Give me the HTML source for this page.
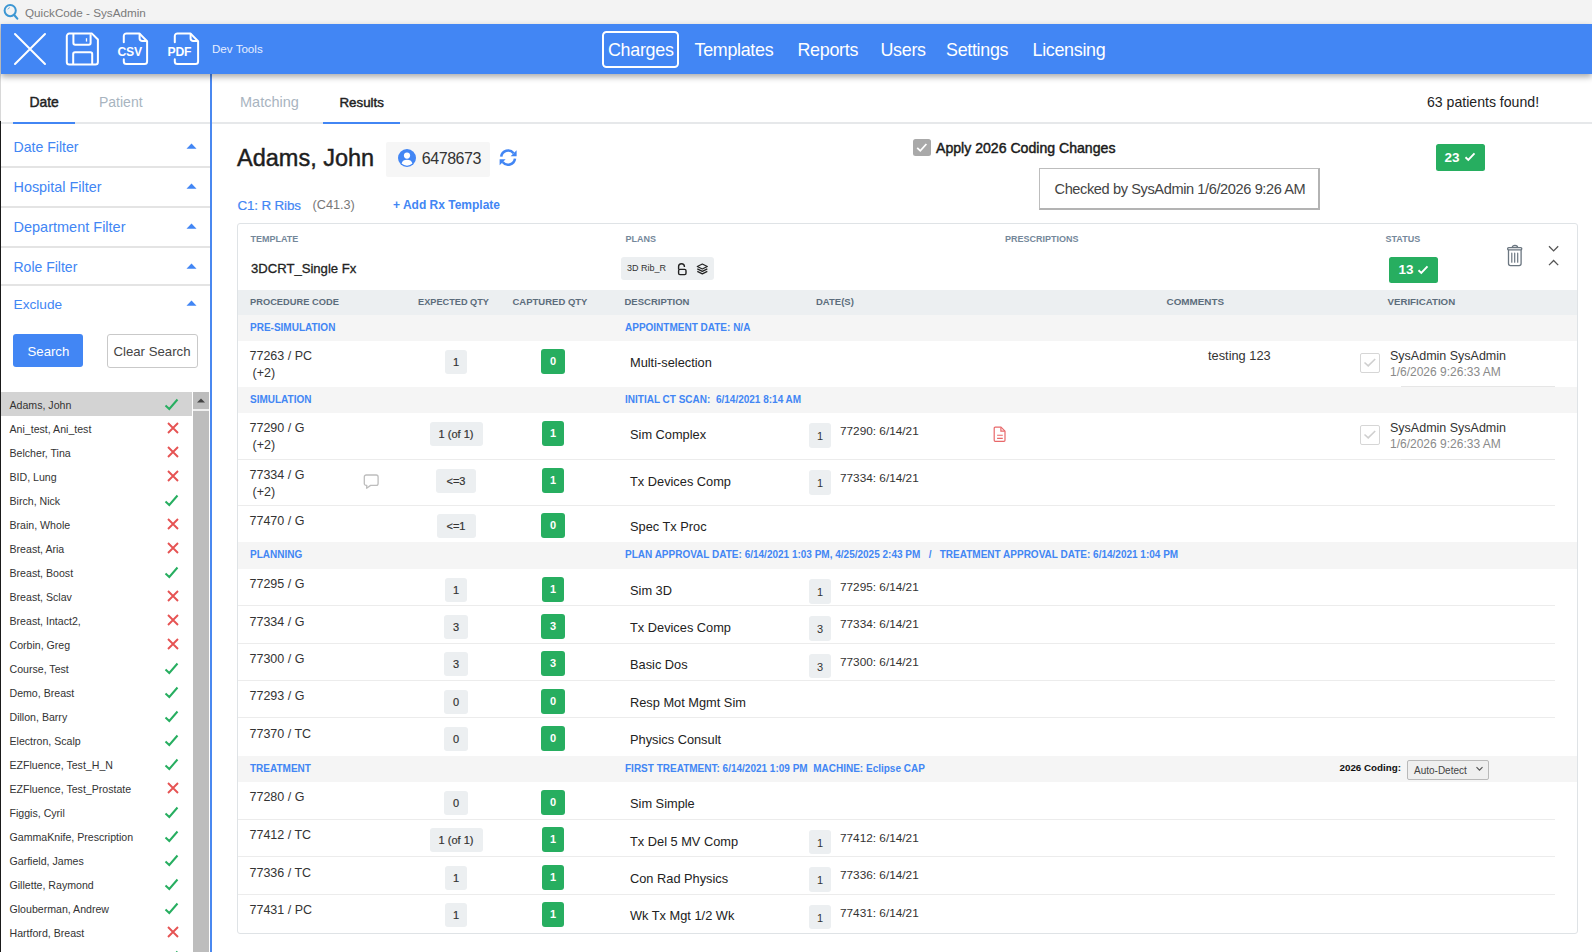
<!DOCTYPE html><html><head><meta charset="utf-8"><style>
*{box-sizing:border-box;margin:0;padding:0}
html,body{width:1592px;height:952px;overflow:hidden;background:#fff;font-family:"Liberation Sans",sans-serif;color:#333}
.t{position:absolute;white-space:nowrap;line-height:1}
.b{position:absolute}
svg{position:absolute;overflow:visible}
</style></head><body>

<div class="b" style="left:0;top:0;width:1592px;height:24px;background:#f3f3f3"></div>
<svg style="left:0;top:0" width="24" height="24"><circle cx="10.2" cy="10.6" r="5.6" fill="none" stroke="#3d97d3" stroke-width="2"/><line x1="14" y1="14.8" x2="17.3" y2="18.6" stroke="#3d97d3" stroke-width="2.2" stroke-linecap="round"/><path d="M7.8 9.4 A3 3 0 0 1 9.8 7.6" stroke="#3d97d3" stroke-width="0.8" fill="none"/></svg>
<div class="t" style="left:25px;top:6.6px;font-size:11.7px;color:#7a7a7a">QuickCode - SysAdmin</div>
<div class="b" style="left:1px;top:24px;width:1591px;height:49.5px;background:#4286f4;box-shadow:0 2.5px 6px rgba(0,0,0,0.33);z-index:2"></div>
<svg style="left:0;top:24px;z-index:3" width="60" height="49"><path d="M15 10 L45 40 M45 10 L15 40" stroke="#fff" stroke-width="2" stroke-linecap="round"/></svg>
<svg style="left:60px;top:24px;z-index:3" width="50" height="49"><path d="M9.3 9.6 H32 L37.9 15.5 V38.1 a2.5 2.5 0 0 1 -2.5 2.5 H9.3 a2.5 2.5 0 0 1 -2.5 -2.5 V12.1 a2.5 2.5 0 0 1 2.5 -2.5 z" fill="none" stroke="#fff" stroke-width="2" stroke-linejoin="round"/><path d="M13.4 9.8 V19 a1.8 1.8 0 0 0 1.8 1.8 H28.8 a1.8 1.8 0 0 0 1.8 -1.8 V10.2" fill="none" stroke="#fff" stroke-width="2"/><path d="M13.2 40.2 V30 a1.8 1.8 0 0 1 1.8 -1.8 H30.4 a1.8 1.8 0 0 1 1.8 1.8 V40.2" fill="none" stroke="#fff" stroke-width="2"/><line x1="26.5" y1="14.2" x2="26.5" y2="17.6" stroke="#fff" stroke-width="1.3"/></svg>
<svg style="left:122px;top:24px;z-index:3" width="40" height="49"><path d="M1.8 18.2 V12 a2.6 2.6 0 0 1 2.6 -2.6 H17.4 L25.1 17.2 V37.5 a2.6 2.6 0 0 1 -2.6 2.6 H4.4 a2.6 2.6 0 0 1 -2.6 -2.6 V35.2" fill="none" stroke="#fff" stroke-width="2" stroke-linejoin="round" stroke-linecap="round"/><path d="M17.6 9.6 V14.4 a2.6 2.6 0 0 0 2.6 2.6 H25" fill="none" stroke="#fff" stroke-width="2" stroke-linejoin="round"/></svg>
<div class="t" style="left:117.5px;top:45.5px;font-size:12.2px;font-weight:700;color:#fff;z-index:3;letter-spacing:-0.2px">CSV</div>
<svg style="left:173px;top:24px;z-index:3" width="40" height="49"><path d="M1.8 18.2 V12 a2.6 2.6 0 0 1 2.6 -2.6 H17.4 L25.1 17.2 V37.5 a2.6 2.6 0 0 1 -2.6 2.6 H4.4 a2.6 2.6 0 0 1 -2.6 -2.6 V35.2" fill="none" stroke="#fff" stroke-width="2" stroke-linejoin="round" stroke-linecap="round"/><path d="M17.6 9.6 V14.4 a2.6 2.6 0 0 0 2.6 2.6 H25" fill="none" stroke="#fff" stroke-width="2" stroke-linejoin="round"/></svg>
<div class="t" style="left:167.5px;top:45.5px;font-size:12.2px;font-weight:700;color:#fff;z-index:3;letter-spacing:-0.2px">PDF</div>
<div class="t" style="left:212px;top:43px;font-size:11.6px;color:#e6eeff;z-index:3">Dev Tools</div>
<div class="b" style="left:602px;top:30.5px;width:77px;height:37.3px;border:2px solid #fff;border-radius:4.5px;z-index:3"></div>
<div class="t" style="left:608px;top:41.8px;font-size:17.9px;letter-spacing:-0.3px;color:#fff;z-index:3">Charges</div>
<div class="t" style="left:694.5px;top:41.8px;font-size:17.9px;letter-spacing:-0.3px;color:#fff;z-index:3">Templates</div>
<div class="t" style="left:797.5px;top:41.8px;font-size:17.9px;letter-spacing:-0.3px;color:#fff;z-index:3">Reports</div>
<div class="t" style="left:880.5px;top:41.8px;font-size:17.9px;letter-spacing:-0.3px;color:#fff;z-index:3">Users</div>
<div class="t" style="left:946px;top:41.8px;font-size:17.9px;letter-spacing:-0.3px;color:#fff;z-index:3">Settings</div>
<div class="t" style="left:1032.5px;top:41.8px;font-size:17.9px;letter-spacing:-0.3px;color:#fff;z-index:3">Licensing</div>
<div class="b" style="left:0;top:24px;width:1px;height:97px;background:#d8d8d8"></div>
<div class="b" style="left:0;top:121px;width:1.3px;height:831px;background:#1a1a1a"></div>
<div class="b" style="left:210px;top:74px;width:2px;height:878px;background:#4a88f0"></div>
<div class="b" style="left:1px;top:122px;width:209px;height:2px;background:#e6e8ea"></div>
<div class="b" style="left:13px;top:122px;width:62px;height:2px;background:#4286f4"></div>
<div class="t" style="left:29.5px;top:96px;font-size:13.9px;color:#222;-webkit-text-stroke:0.45px #222">Date</div>
<div class="t" style="left:99px;top:95px;font-size:14px;color:#a8b4bf">Patient</div>
<div class="t" style="left:13.5px;top:140.38px;font-size:14.1px;color:#4286f4">Date Filter</div>
<svg style="left:186px;top:143px" width="12" height="7"><path d="M0.5 5.8 L5.5 0.5 L10.5 5.8 Z" fill="#4286f4"/></svg>
<div class="b" style="left:1px;top:166px;width:209px;height:2px;background:#e4e4e4"></div>
<div class="t" style="left:13.5px;top:180.2px;font-size:14.4px;color:#4286f4">Hospital Filter</div>
<svg style="left:186px;top:183px" width="12" height="7"><path d="M0.5 5.8 L5.5 0.5 L10.5 5.8 Z" fill="#4286f4"/></svg>
<div class="b" style="left:1px;top:206px;width:209px;height:2px;background:#e4e4e4"></div>
<div class="t" style="left:13.5px;top:220.14px;font-size:14.5px;color:#4286f4">Department Filter</div>
<svg style="left:186px;top:223px" width="12" height="7"><path d="M0.5 5.8 L5.5 0.5 L10.5 5.8 Z" fill="#4286f4"/></svg>
<div class="b" style="left:1px;top:246px;width:209px;height:2px;background:#e4e4e4"></div>
<div class="t" style="left:13.5px;top:260.44px;font-size:14.0px;color:#4286f4">Role Filter</div>
<svg style="left:186px;top:263px" width="12" height="7"><path d="M0.5 5.8 L5.5 0.5 L10.5 5.8 Z" fill="#4286f4"/></svg>
<div class="b" style="left:1px;top:284px;width:209px;height:2px;background:#e4e4e4"></div>
<div class="t" style="left:13.5px;top:297.62px;font-size:13.7px;color:#4286f4">Exclude</div>
<svg style="left:186px;top:300px" width="12" height="7"><path d="M0.5 5.8 L5.5 0.5 L10.5 5.8 Z" fill="#4286f4"/></svg>
<div class="b" style="left:13px;top:334px;width:70px;height:33px;background:#4286f4;border-radius:3px"></div>
<div class="t" style="left:27.5px;top:345px;font-size:13.2px;color:#fff">Search</div>
<div class="b" style="left:106.5px;top:334px;width:91.5px;height:34px;border:1px solid #c9c9c9;border-radius:3px;background:#fff"></div>
<div class="t" style="left:113.5px;top:345px;font-size:13.2px;color:#444">Clear Search</div>
<div class="b" style="left:1px;top:392px;width:191px;height:24px;background:#d3d3d3"></div>
<div class="t" style="left:9.5px;top:400px;font-size:10.6px;color:#333">Adams, John</div>
<svg style="left:164px;top:398px" width="16" height="13"><path d="M1.5 7.5 L5.3 11 L13.5 1.5" fill="none" stroke="#27ae60" stroke-width="2"/></svg>
<div class="t" style="left:9.5px;top:424px;font-size:10.6px;color:#333">Ani_test, Ani_test</div>
<svg style="left:167px;top:422px" width="13" height="13"><path d="M1 1 L11 11 M11 1 L1 11" fill="none" stroke="#e65353" stroke-width="1.9"/></svg>
<div class="t" style="left:9.5px;top:448px;font-size:10.6px;color:#333">Belcher, Tina</div>
<svg style="left:167px;top:446px" width="13" height="13"><path d="M1 1 L11 11 M11 1 L1 11" fill="none" stroke="#e65353" stroke-width="1.9"/></svg>
<div class="t" style="left:9.5px;top:472px;font-size:10.6px;color:#333">BID, Lung</div>
<svg style="left:167px;top:470px" width="13" height="13"><path d="M1 1 L11 11 M11 1 L1 11" fill="none" stroke="#e65353" stroke-width="1.9"/></svg>
<div class="t" style="left:9.5px;top:496px;font-size:10.6px;color:#333">Birch, Nick</div>
<svg style="left:164px;top:494px" width="16" height="13"><path d="M1.5 7.5 L5.3 11 L13.5 1.5" fill="none" stroke="#27ae60" stroke-width="2"/></svg>
<div class="t" style="left:9.5px;top:520px;font-size:10.6px;color:#333">Brain, Whole</div>
<svg style="left:167px;top:518px" width="13" height="13"><path d="M1 1 L11 11 M11 1 L1 11" fill="none" stroke="#e65353" stroke-width="1.9"/></svg>
<div class="t" style="left:9.5px;top:544px;font-size:10.6px;color:#333">Breast, Aria</div>
<svg style="left:167px;top:542px" width="13" height="13"><path d="M1 1 L11 11 M11 1 L1 11" fill="none" stroke="#e65353" stroke-width="1.9"/></svg>
<div class="t" style="left:9.5px;top:568px;font-size:10.6px;color:#333">Breast, Boost</div>
<svg style="left:164px;top:566px" width="16" height="13"><path d="M1.5 7.5 L5.3 11 L13.5 1.5" fill="none" stroke="#27ae60" stroke-width="2"/></svg>
<div class="t" style="left:9.5px;top:592px;font-size:10.6px;color:#333">Breast, Sclav</div>
<svg style="left:167px;top:590px" width="13" height="13"><path d="M1 1 L11 11 M11 1 L1 11" fill="none" stroke="#e65353" stroke-width="1.9"/></svg>
<div class="t" style="left:9.5px;top:616px;font-size:10.6px;color:#333">Breast, Intact2,</div>
<svg style="left:167px;top:614px" width="13" height="13"><path d="M1 1 L11 11 M11 1 L1 11" fill="none" stroke="#e65353" stroke-width="1.9"/></svg>
<div class="t" style="left:9.5px;top:640px;font-size:10.6px;color:#333">Corbin, Greg</div>
<svg style="left:167px;top:638px" width="13" height="13"><path d="M1 1 L11 11 M11 1 L1 11" fill="none" stroke="#e65353" stroke-width="1.9"/></svg>
<div class="t" style="left:9.5px;top:664px;font-size:10.6px;color:#333">Course, Test</div>
<svg style="left:164px;top:662px" width="16" height="13"><path d="M1.5 7.5 L5.3 11 L13.5 1.5" fill="none" stroke="#27ae60" stroke-width="2"/></svg>
<div class="t" style="left:9.5px;top:688px;font-size:10.6px;color:#333">Demo, Breast</div>
<svg style="left:164px;top:686px" width="16" height="13"><path d="M1.5 7.5 L5.3 11 L13.5 1.5" fill="none" stroke="#27ae60" stroke-width="2"/></svg>
<div class="t" style="left:9.5px;top:712px;font-size:10.6px;color:#333">Dillon, Barry</div>
<svg style="left:164px;top:710px" width="16" height="13"><path d="M1.5 7.5 L5.3 11 L13.5 1.5" fill="none" stroke="#27ae60" stroke-width="2"/></svg>
<div class="t" style="left:9.5px;top:736px;font-size:10.6px;color:#333">Electron, Scalp</div>
<svg style="left:164px;top:734px" width="16" height="13"><path d="M1.5 7.5 L5.3 11 L13.5 1.5" fill="none" stroke="#27ae60" stroke-width="2"/></svg>
<div class="t" style="left:9.5px;top:760px;font-size:10.6px;color:#333">EZFluence, Test_H_N</div>
<svg style="left:164px;top:758px" width="16" height="13"><path d="M1.5 7.5 L5.3 11 L13.5 1.5" fill="none" stroke="#27ae60" stroke-width="2"/></svg>
<div class="t" style="left:9.5px;top:784px;font-size:10.6px;color:#333">EZFluence, Test_Prostate</div>
<svg style="left:167px;top:782px" width="13" height="13"><path d="M1 1 L11 11 M11 1 L1 11" fill="none" stroke="#e65353" stroke-width="1.9"/></svg>
<div class="t" style="left:9.5px;top:808px;font-size:10.6px;color:#333">Figgis, Cyril</div>
<svg style="left:164px;top:806px" width="16" height="13"><path d="M1.5 7.5 L5.3 11 L13.5 1.5" fill="none" stroke="#27ae60" stroke-width="2"/></svg>
<div class="t" style="left:9.5px;top:832px;font-size:10.6px;color:#333">GammaKnife, Prescription</div>
<svg style="left:164px;top:830px" width="16" height="13"><path d="M1.5 7.5 L5.3 11 L13.5 1.5" fill="none" stroke="#27ae60" stroke-width="2"/></svg>
<div class="t" style="left:9.5px;top:856px;font-size:10.6px;color:#333">Garfield, James</div>
<svg style="left:164px;top:854px" width="16" height="13"><path d="M1.5 7.5 L5.3 11 L13.5 1.5" fill="none" stroke="#27ae60" stroke-width="2"/></svg>
<div class="t" style="left:9.5px;top:880px;font-size:10.6px;color:#333">Gillette, Raymond</div>
<svg style="left:164px;top:878px" width="16" height="13"><path d="M1.5 7.5 L5.3 11 L13.5 1.5" fill="none" stroke="#27ae60" stroke-width="2"/></svg>
<div class="t" style="left:9.5px;top:904px;font-size:10.6px;color:#333">Glouberman, Andrew</div>
<svg style="left:164px;top:902px" width="16" height="13"><path d="M1.5 7.5 L5.3 11 L13.5 1.5" fill="none" stroke="#27ae60" stroke-width="2"/></svg>
<div class="t" style="left:9.5px;top:928px;font-size:10.6px;color:#333">Hartford, Breast</div>
<svg style="left:167px;top:926px" width="13" height="13"><path d="M1 1 L11 11 M11 1 L1 11" fill="none" stroke="#e65353" stroke-width="1.9"/></svg>
<div class="t" style="left:9.5px;top:952px;font-size:10.6px;color:#333">Hologic, Will</div>
<svg style="left:164px;top:950px" width="16" height="13"><path d="M1.5 7.5 L5.3 11 L13.5 1.5" fill="none" stroke="#27ae60" stroke-width="2"/></svg>
<div class="b" style="left:193px;top:392px;width:16px;height:560px;background:#f0f0f0"></div>
<div class="b" style="left:193px;top:392px;width:16px;height:17px;background:#bdbdbd"></div>
<svg style="left:193px;top:392px" width="16" height="17"><path d="M4 10.5 L8 6.5 L12 10.5 Z" fill="#444"/></svg>
<div class="b" style="left:193px;top:411px;width:16px;height:541px;background:#bdbdbd"></div>
<div class="b" style="left:212px;top:122px;width:1380px;height:2px;background:#e6e8ea"></div>
<div class="b" style="left:323px;top:122px;width:77px;height:2px;background:#4286f4"></div>
<div class="t" style="left:240px;top:95.4px;font-size:14.5px;color:#a8b4bf">Matching</div>
<div class="t" style="left:339.5px;top:95.5px;font-size:13.3px;color:#222;-webkit-text-stroke:0.45px #222">Results</div>
<div class="t" style="left:1427px;top:95px;font-size:14.1px;color:#222">63 patients found!</div>
<div class="t" style="left:237px;top:147px;font-size:23.5px;color:#1e1e1e;-webkit-text-stroke:0.45px #1e1e1e">Adams, John</div>
<div class="b" style="left:386px;top:142px;width:104px;height:35px;background:#f6f6f6;border-radius:2px"></div>
<svg style="left:398px;top:149px" width="18" height="18"><circle cx="9" cy="9" r="9" fill="#4286f4"/><circle cx="9" cy="6.6" r="3.1" fill="#fff"/><path d="M3.6 14.6 C4.4 11.6 6.2 10.7 9 10.7 C11.8 10.7 13.6 11.6 14.4 14.6 A8 8 0 0 1 3.6 14.6 Z" fill="#fff"/></svg>
<div class="t" style="left:421.8px;top:151px;font-size:16px;letter-spacing:-0.45px;color:#333">6478673</div>
<svg style="left:499px;top:149px" width="20" height="18"><path d="M2.2 7.6 A7 7 0 0 1 14.6 4.2" fill="none" stroke="#4286f4" stroke-width="2.6"/><path d="M17.6 1.2 V7.2 H11.6 Z" fill="#4286f4"/><path d="M16 9.6 A7 7 0 0 1 3.6 13" fill="none" stroke="#4286f4" stroke-width="2.6"/><path d="M0.6 16.2 V10.2 H6.6 Z" fill="#4286f4"/></svg>
<div class="t" style="left:237.5px;top:199.2px;font-size:13.4px;letter-spacing:-0.15px;-webkit-text-stroke:0.2px #4286f4;color:#4286f4">C1: R Ribs</div>
<div class="t" style="left:312.5px;top:199.3px;font-size:12.7px;color:#777">(C41.3)</div>
<div class="t" style="left:393px;top:199px;font-size:12px;font-weight:700;color:#4286f4">+ Add Rx Template</div>
<div class="b" style="left:913px;top:139px;width:17.5px;height:17px;background:#a9a9a9;border-radius:2.5px"></div>
<svg style="left:913px;top:139px" width="18" height="17"><path d="M4.2 8.8 L7.3 11.8 L13.4 5" fill="none" stroke="#fff" stroke-width="1.8"/></svg>
<div class="t" style="left:936px;top:140.8px;font-size:14.1px;color:#1a1a1a;-webkit-text-stroke:0.45px #1a1a1a">Apply 2026 Coding Changes</div>
<div class="b" style="left:1039px;top:168px;width:281px;height:42px;background:#fff;border:1px solid #bdbdbd;border-right:2px solid #b3b3b3;border-bottom:2px solid #b3b3b3"></div>
<div class="t" style="left:1054.5px;top:182.3px;font-size:14.6px;letter-spacing:-0.4px;color:#444">Checked by SysAdmin 1/6/2026 9:26 AM</div>
<div class="b" style="left:1436px;top:144px;width:49px;height:26.5px;background:#27ae60;border-radius:2.5px"></div>
<div class="t" style="left:1444.5px;top:150.5px;font-size:13.5px;font-weight:700;color:#fff">23</div>
<svg style="left:1464px;top:151px" width="12" height="12"><path d="M1.5 6.3 L4.3 9 L10.5 2.3" fill="none" stroke="#fff" stroke-width="1.9"/></svg>
<div class="b" style="left:237px;top:223px;width:1341px;height:711px;border:1px solid #dfe3e6;border-radius:3px"></div>
<div class="t" style="left:250.5px;top:234.5px;font-size:9px;font-weight:700;color:#74879a">TEMPLATE</div>
<div class="t" style="left:625.5px;top:234.5px;font-size:9px;font-weight:700;color:#74879a">PLANS</div>
<div class="t" style="left:1005px;top:234.5px;font-size:9px;font-weight:700;color:#74879a">PRESCRIPTIONS</div>
<div class="t" style="left:1385.5px;top:234.5px;font-size:9px;font-weight:700;color:#74879a">STATUS</div>
<div class="t" style="left:251px;top:262px;font-size:13.1px;color:#222;-webkit-text-stroke:0.3px #222">3DCRT_Single Fx</div>
<div class="b" style="left:621px;top:257px;width:93px;height:23px;background:#eceff1;border-radius:3px"></div>
<div class="t" style="left:627px;top:263.6px;font-size:9px;color:#333">3D Rib_R</div>
<svg style="left:676px;top:262px" width="12" height="14"><path d="M2.6 7.4 V4.6 a2.9 2.9 0 0 1 5.8 0 V5" fill="none" stroke="#222" stroke-width="1.4"/><rect x="2.6" y="7.4" width="7.4" height="5.2" rx="1.3" fill="none" stroke="#222" stroke-width="1.4"/></svg>
<svg style="left:696px;top:263px" width="13" height="13"><path d="M6.3 1 L11.3 3.5 L6.3 6 L1.3 3.5 Z" fill="none" stroke="#222" stroke-width="1.2" stroke-linejoin="round"/><path d="M1.3 5.9 L6.3 8.4 L11.3 5.9" fill="none" stroke="#222" stroke-width="1.2" stroke-linejoin="round"/><path d="M1.3 8.4 L6.3 10.9 L11.3 8.4" fill="none" stroke="#222" stroke-width="1.2" stroke-linejoin="round"/></svg>
<div class="b" style="left:1389px;top:256.5px;width:49px;height:26.5px;background:#27ae60;border-radius:2.5px"></div>
<div class="t" style="left:1398.5px;top:263px;font-size:13.5px;font-weight:700;color:#fff">13</div>
<svg style="left:1417px;top:263.5px" width="12" height="12"><path d="M1.5 6.3 L4.3 9 L10.5 2.3" fill="none" stroke="#fff" stroke-width="1.9"/></svg>
<svg style="left:1506px;top:244px" width="18" height="24"><rect x="1.6" y="3.7" width="14.2" height="2.2" rx="1.1" fill="none" stroke="#6b7680" stroke-width="1.3"/><path d="M6.2 3.6 a2.7 2.1 0 0 1 5.4 0" fill="none" stroke="#6b7680" stroke-width="1.3"/><path d="M2.5 6 V19.6 a2 2 0 0 0 2 2 H13.1 a2 2 0 0 0 2 -2 V6" fill="none" stroke="#6b7680" stroke-width="1.3"/><path d="M5.8 9.2 V18.2 M8.7 9.2 V18.2 M11.7 9.2 V18.2" stroke="#6b7680" stroke-width="1.2" stroke-linecap="round"/></svg>
<svg style="left:1546px;top:243px" width="14" height="25"><path d="M3 3.3 L7.6 7.9 L12.2 3.3" fill="none" stroke="#555" stroke-width="1.3"/><path d="M3 22.1 L7.6 17.5 L12.2 22.1" fill="none" stroke="#555" stroke-width="1.3"/></svg>
<div class="b" style="left:238px;top:290px;width:1339px;height:25px;background:#eceff1"></div>
<div class="t" style="left:250px;top:297.5px;font-size:9.3px;font-weight:700;color:#5c6d7c">PROCEDURE CODE</div>
<div class="t" style="left:418px;top:297.55px;font-size:9.2px;font-weight:700;color:#5c6d7c">EXPECTED QTY</div>
<div class="t" style="left:512.5px;top:297.40000000000003px;font-size:9.5px;font-weight:700;color:#5c6d7c">CAPTURED QTY</div>
<div class="t" style="left:624.5px;top:297.40000000000003px;font-size:9.5px;font-weight:700;color:#5c6d7c">DESCRIPTION</div>
<div class="t" style="left:816px;top:297.40000000000003px;font-size:9.5px;font-weight:700;color:#5c6d7c">DATE(S)</div>
<div class="t" style="left:1166.5px;top:297.2px;font-size:9.9px;font-weight:700;color:#5c6d7c">COMMENTS</div>
<div class="t" style="left:1387.5px;top:297.3px;font-size:9.7px;font-weight:700;color:#5c6d7c">VERIFICATION</div>
<div class="b" style="left:238px;top:315px;width:1339px;height:26px;background:#f5f5f5"></div>
<div class="t" style="left:250px;top:323px;font-size:10px;font-weight:700;color:#4286f4">PRE-SIMULATION</div>
<div class="t" style="left:625px;top:323px;font-size:10px;font-weight:700;color:#4286f4">APPOINTMENT DATE: N/A</div>
<div class="t" style="left:249.5px;top:350.2px;font-size:12.5px;color:#333">77263 / PC</div>
<div class="t" style="left:252.5px;top:367.3px;font-size:12.5px;color:#333">(+2)</div>
<div class="b" style="left:445.0px;top:349.7px;width:22px;height:24px;background:#eceff1;border-radius:3px"></div>
<div class="t" style="left:445.0px;top:356.7px;width:22px;text-align:center;font-size:11px;color:#333;-webkit-text-stroke:0.2px #333">1</div>
<div class="b" style="left:541.0px;top:348.7px;width:24px;height:25px;background:#27ae60;border-radius:3px"></div>
<div class="t" style="left:541.0px;top:355.7px;width:24px;text-align:center;font-size:11px;font-weight:700;color:#fff">0</div>
<div class="t" style="left:630px;top:356.9px;font-size:12.8px;color:#222">Multi-selection</div>
<div class="t" style="left:1208px;top:349.5px;font-size:12.8px;color:#333">testing 123</div>
<div class="b" style="left:1360px;top:353.3px;width:20px;height:20px;border:1.5px solid #d6d6d6;border-radius:2px;background:#fff"></div>
<svg style="left:1360px;top:353.3px" width="20" height="20"><path d="M4.5 9.5 L8.2 12.8 L15.2 6" fill="none" stroke="#cfcfcf" stroke-width="1.6"/></svg>
<div class="t" style="left:1390px;top:349.5px;font-size:12.5px;color:#333">SysAdmin SysAdmin</div>
<div class="t" style="left:1390px;top:366.2px;font-size:12px;color:#8a8a8a">1/6/2026 9:26:33 AM</div>
<div class="b" style="left:1401px;top:386px;width:154px;height:1px;background:#e6e6e6"></div>
<div class="b" style="left:238px;top:387px;width:1339px;height:26px;background:#f5f5f5"></div>
<div class="t" style="left:250px;top:395px;font-size:10px;font-weight:700;color:#4286f4">SIMULATION</div>
<div class="t" style="left:625px;top:395px;font-size:10px;font-weight:700;color:#4286f4">INITIAL CT SCAN: &nbsp;6/14/2021 8:14 AM</div>
<div class="b" style="left:238px;top:459px;width:1317px;height:1px;background:#ececec"></div>
<div class="t" style="left:249.5px;top:422.2px;font-size:12.5px;color:#333">77290 / G</div>
<div class="t" style="left:252.5px;top:439.3px;font-size:12.5px;color:#333">(+2)</div>
<div class="b" style="left:429.5px;top:421.7px;width:53px;height:24px;background:#eceff1;border-radius:3px"></div>
<div class="t" style="left:429.5px;top:428.7px;width:53px;text-align:center;font-size:11px;color:#333;-webkit-text-stroke:0.2px #333">1 (of 1)</div>
<div class="b" style="left:541.75px;top:420.7px;width:22.5px;height:25px;background:#27ae60;border-radius:3px"></div>
<div class="t" style="left:541.75px;top:427.7px;width:22.5px;text-align:center;font-size:11px;font-weight:700;color:#fff">1</div>
<div class="t" style="left:630px;top:428.9px;font-size:12.8px;color:#222">Sim Complex</div>
<div class="b" style="left:809px;top:423.09999999999997px;width:22px;height:24.5px;background:#eceff1;border-radius:3px"></div>
<div class="t" style="left:809px;top:431.09999999999997px;width:22px;text-align:center;font-size:11px;color:#333">1</div>
<div class="t" style="left:840px;top:426.0px;font-size:11.8px;color:#333">77290: 6/14/21</div>
<svg style="left:993px;top:425.5px" width="14" height="17"><path d="M2.2 1.2 h5.8 l4 4 v9.1 a1 1 0 0 1 -1 1 h-8.8 a1 1 0 0 1 -1 -1 v-12.1 a1 1 0 0 1 1 -1 z" fill="none" stroke="#e8686a" stroke-width="1.2" stroke-linejoin="round"/><path d="M7.9 1.4 v3.7 h3.9" fill="none" stroke="#e8686a" stroke-width="1.2"/><path d="M4.1 9.2 h5.7 M4.1 12.4 h5.7" stroke="#e8686a" stroke-width="1.1"/></svg>
<div class="b" style="left:1360px;top:425.3px;width:20px;height:20px;border:1.5px solid #d6d6d6;border-radius:2px;background:#fff"></div>
<svg style="left:1360px;top:425.3px" width="20" height="20"><path d="M4.5 9.5 L8.2 12.8 L15.2 6" fill="none" stroke="#cfcfcf" stroke-width="1.6"/></svg>
<div class="t" style="left:1390px;top:421.5px;font-size:12.5px;color:#333">SysAdmin SysAdmin</div>
<div class="t" style="left:1390px;top:438.2px;font-size:12px;color:#8a8a8a">1/6/2026 9:26:33 AM</div>
<div class="b" style="left:1401px;top:459px;width:154px;height:1px;background:#e6e6e6"></div>
<div class="b" style="left:238px;top:504.5px;width:1317px;height:1px;background:#ececec"></div>
<div class="t" style="left:249.5px;top:469.2px;font-size:12.5px;color:#333">77334 / G</div>
<div class="t" style="left:252.5px;top:486.3px;font-size:12.5px;color:#333">(+2)</div>
<div class="b" style="left:436.0px;top:468.7px;width:40px;height:24px;background:#eceff1;border-radius:3px"></div>
<div class="t" style="left:436.0px;top:475.7px;width:40px;text-align:center;font-size:11px;color:#333;-webkit-text-stroke:0.2px #333">&lt;=3</div>
<div class="b" style="left:541.75px;top:467.7px;width:22.5px;height:25px;background:#27ae60;border-radius:3px"></div>
<div class="t" style="left:541.75px;top:474.7px;width:22.5px;text-align:center;font-size:11px;font-weight:700;color:#fff">1</div>
<div class="t" style="left:630px;top:475.9px;font-size:12.8px;color:#222">Tx Devices Comp</div>
<div class="b" style="left:809px;top:470.09999999999997px;width:22px;height:24.5px;background:#eceff1;border-radius:3px"></div>
<div class="t" style="left:809px;top:478.09999999999997px;width:22px;text-align:center;font-size:11px;color:#333">1</div>
<div class="t" style="left:840px;top:473.0px;font-size:11.8px;color:#333">77334: 6/14/21</div>
<svg style="left:362px;top:473.2px" width="18" height="18"><path d="M4.2 2 h10 a1.9 1.9 0 0 1 1.9 1.9 v6.6 a1.9 1.9 0 0 1 -1.9 1.9 h-5.6 l-4 2.8 l0.2 -2.8 h-0.6 a1.9 1.9 0 0 1 -1.9 -1.9 v-6.6 a1.9 1.9 0 0 1 1.9 -1.9 z" fill="none" stroke="#bdbdbd" stroke-width="1.3" stroke-linejoin="round"/></svg>
<div class="t" style="left:249.5px;top:514.7px;font-size:12.5px;color:#333">77470 / G</div>
<div class="b" style="left:436.5px;top:514.2px;width:39px;height:24px;background:#eceff1;border-radius:3px"></div>
<div class="t" style="left:436.5px;top:521.2px;width:39px;text-align:center;font-size:11px;color:#333;-webkit-text-stroke:0.2px #333">&lt;=1</div>
<div class="b" style="left:541.0px;top:513.2px;width:24px;height:25px;background:#27ae60;border-radius:3px"></div>
<div class="t" style="left:541.0px;top:520.2px;width:24px;text-align:center;font-size:11px;font-weight:700;color:#fff">0</div>
<div class="t" style="left:630px;top:521.4000000000001px;font-size:12.8px;color:#222">Spec Tx Proc</div>
<div class="b" style="left:238px;top:542px;width:1339px;height:27px;background:#f5f5f5"></div>
<div class="t" style="left:250px;top:550px;font-size:10px;font-weight:700;color:#4286f4">PLANNING</div>
<div class="t" style="left:625px;top:550px;font-size:10px;font-weight:700;color:#4286f4">PLAN APPROVAL DATE: 6/14/2021 1:03 PM, 4/25/2025 2:43 PM &nbsp;&nbsp;/&nbsp;&nbsp; TREATMENT APPROVAL DATE: 6/14/2021 1:04 PM</div>
<div class="b" style="left:238px;top:605.3px;width:1317px;height:1px;background:#ececec"></div>
<div class="t" style="left:249.5px;top:578.2px;font-size:12.5px;color:#333">77295 / G</div>
<div class="b" style="left:445.0px;top:577.7px;width:22px;height:24px;background:#eceff1;border-radius:3px"></div>
<div class="t" style="left:445.0px;top:584.7px;width:22px;text-align:center;font-size:11px;color:#333;-webkit-text-stroke:0.2px #333">1</div>
<div class="b" style="left:541.75px;top:576.7px;width:22.5px;height:25px;background:#27ae60;border-radius:3px"></div>
<div class="t" style="left:541.75px;top:583.7px;width:22.5px;text-align:center;font-size:11px;font-weight:700;color:#fff">1</div>
<div class="t" style="left:630px;top:584.9000000000001px;font-size:12.8px;color:#222">Sim 3D</div>
<div class="b" style="left:809px;top:579.1px;width:22px;height:24.5px;background:#eceff1;border-radius:3px"></div>
<div class="t" style="left:809px;top:587.1px;width:22px;text-align:center;font-size:11px;color:#333">1</div>
<div class="t" style="left:840px;top:582.0px;font-size:11.8px;color:#333">77295: 6/14/21</div>
<div class="b" style="left:238px;top:642.5px;width:1317px;height:1px;background:#ececec"></div>
<div class="t" style="left:249.5px;top:615.5px;font-size:12.5px;color:#333">77334 / G</div>
<div class="b" style="left:444.0px;top:615.0px;width:24px;height:24px;background:#eceff1;border-radius:3px"></div>
<div class="t" style="left:444.0px;top:622.0px;width:24px;text-align:center;font-size:11px;color:#333;-webkit-text-stroke:0.2px #333">3</div>
<div class="b" style="left:541.0px;top:614.0px;width:24px;height:25px;background:#27ae60;border-radius:3px"></div>
<div class="t" style="left:541.0px;top:621.0px;width:24px;text-align:center;font-size:11px;font-weight:700;color:#fff">3</div>
<div class="t" style="left:630px;top:622.2px;font-size:12.8px;color:#222">Tx Devices Comp</div>
<div class="b" style="left:809px;top:616.4px;width:22px;height:24.5px;background:#eceff1;border-radius:3px"></div>
<div class="t" style="left:809px;top:624.4px;width:22px;text-align:center;font-size:11px;color:#333">3</div>
<div class="t" style="left:840px;top:619.3px;font-size:11.8px;color:#333">77334: 6/14/21</div>
<div class="b" style="left:238px;top:680px;width:1317px;height:1px;background:#ececec"></div>
<div class="t" style="left:249.5px;top:652.7px;font-size:12.5px;color:#333">77300 / G</div>
<div class="b" style="left:444.0px;top:652.2px;width:24px;height:24px;background:#eceff1;border-radius:3px"></div>
<div class="t" style="left:444.0px;top:659.2px;width:24px;text-align:center;font-size:11px;color:#333;-webkit-text-stroke:0.2px #333">3</div>
<div class="b" style="left:541.0px;top:651.2px;width:24px;height:25px;background:#27ae60;border-radius:3px"></div>
<div class="t" style="left:541.0px;top:658.2px;width:24px;text-align:center;font-size:11px;font-weight:700;color:#fff">3</div>
<div class="t" style="left:630px;top:659.4000000000001px;font-size:12.8px;color:#222">Basic Dos</div>
<div class="b" style="left:809px;top:653.6px;width:22px;height:24.5px;background:#eceff1;border-radius:3px"></div>
<div class="t" style="left:809px;top:661.6px;width:22px;text-align:center;font-size:11px;color:#333">3</div>
<div class="t" style="left:840px;top:656.5px;font-size:11.8px;color:#333">77300: 6/14/21</div>
<div class="b" style="left:238px;top:717.3px;width:1317px;height:1px;background:#ececec"></div>
<div class="t" style="left:249.5px;top:690.2px;font-size:12.5px;color:#333">77293 / G</div>
<div class="b" style="left:444.0px;top:689.7px;width:24px;height:24px;background:#eceff1;border-radius:3px"></div>
<div class="t" style="left:444.0px;top:696.7px;width:24px;text-align:center;font-size:11px;color:#333;-webkit-text-stroke:0.2px #333">0</div>
<div class="b" style="left:541.0px;top:688.7px;width:24px;height:25px;background:#27ae60;border-radius:3px"></div>
<div class="t" style="left:541.0px;top:695.7px;width:24px;text-align:center;font-size:11px;font-weight:700;color:#fff">0</div>
<div class="t" style="left:630px;top:696.9000000000001px;font-size:12.8px;color:#222">Resp Mot Mgmt Sim</div>
<div class="t" style="left:249.5px;top:727.5px;font-size:12.5px;color:#333">77370 / TC</div>
<div class="b" style="left:444.0px;top:727.0px;width:24px;height:24px;background:#eceff1;border-radius:3px"></div>
<div class="t" style="left:444.0px;top:734.0px;width:24px;text-align:center;font-size:11px;color:#333;-webkit-text-stroke:0.2px #333">0</div>
<div class="b" style="left:541.0px;top:726.0px;width:24px;height:25px;background:#27ae60;border-radius:3px"></div>
<div class="t" style="left:541.0px;top:733.0px;width:24px;text-align:center;font-size:11px;font-weight:700;color:#fff">0</div>
<div class="t" style="left:630px;top:734.2px;font-size:12.8px;color:#222">Physics Consult</div>
<div class="b" style="left:238px;top:756px;width:1339px;height:26px;background:#f5f5f5"></div>
<div class="t" style="left:250px;top:764px;font-size:10px;font-weight:700;color:#4286f4">TREATMENT</div>
<div class="t" style="left:625px;top:764px;font-size:10px;font-weight:700;color:#4286f4">FIRST TREATMENT: 6/14/2021 1:09 PM &nbsp;MACHINE: Eclipse CAP</div>
<div class="t" style="left:1339.5px;top:762.8px;font-size:9.8px;font-weight:700;color:#111">2026 Coding:</div>
<div class="b" style="left:1407px;top:760px;width:82px;height:19.5px;background:#efefef;border:1px solid #b9b9b9;border-radius:2px"></div>
<div class="t" style="left:1414px;top:765.5px;font-size:10px;color:#444">Auto-Detect</div>
<svg style="left:1475px;top:765px" width="10" height="8"><path d="M1.5 2.2 L4.5 5.2 L7.5 2.2" fill="none" stroke="#555" stroke-width="1.2"/></svg>
<div class="b" style="left:238px;top:818.6px;width:1317px;height:1px;background:#ececec"></div>
<div class="t" style="left:249.5px;top:791.2px;font-size:12.5px;color:#333">77280 / G</div>
<div class="b" style="left:444.0px;top:790.7px;width:24px;height:24px;background:#eceff1;border-radius:3px"></div>
<div class="t" style="left:444.0px;top:797.7px;width:24px;text-align:center;font-size:11px;color:#333;-webkit-text-stroke:0.2px #333">0</div>
<div class="b" style="left:541.0px;top:789.7px;width:24px;height:25px;background:#27ae60;border-radius:3px"></div>
<div class="t" style="left:541.0px;top:796.7px;width:24px;text-align:center;font-size:11px;font-weight:700;color:#fff">0</div>
<div class="t" style="left:630px;top:797.9000000000001px;font-size:12.8px;color:#222">Sim Simple</div>
<div class="b" style="left:238px;top:856.3px;width:1317px;height:1px;background:#ececec"></div>
<div class="t" style="left:249.5px;top:828.8000000000001px;font-size:12.5px;color:#333">77412 / TC</div>
<div class="b" style="left:429.5px;top:828.3000000000001px;width:53px;height:24px;background:#eceff1;border-radius:3px"></div>
<div class="t" style="left:429.5px;top:835.3000000000001px;width:53px;text-align:center;font-size:11px;color:#333;-webkit-text-stroke:0.2px #333">1 (of 1)</div>
<div class="b" style="left:541.75px;top:827.3000000000001px;width:22.5px;height:25px;background:#27ae60;border-radius:3px"></div>
<div class="t" style="left:541.75px;top:834.3000000000001px;width:22.5px;text-align:center;font-size:11px;font-weight:700;color:#fff">1</div>
<div class="t" style="left:630px;top:835.5000000000001px;font-size:12.8px;color:#222">Tx Del 5 MV Comp</div>
<div class="b" style="left:809px;top:829.7px;width:22px;height:24.5px;background:#eceff1;border-radius:3px"></div>
<div class="t" style="left:809px;top:837.7px;width:22px;text-align:center;font-size:11px;color:#333">1</div>
<div class="t" style="left:840px;top:832.6px;font-size:11.8px;color:#333">77412: 6/14/21</div>
<div class="b" style="left:238px;top:893.5px;width:1317px;height:1px;background:#ececec"></div>
<div class="t" style="left:249.5px;top:866.5px;font-size:12.5px;color:#333">77336 / TC</div>
<div class="b" style="left:445.0px;top:866.0px;width:22px;height:24px;background:#eceff1;border-radius:3px"></div>
<div class="t" style="left:445.0px;top:873.0px;width:22px;text-align:center;font-size:11px;color:#333;-webkit-text-stroke:0.2px #333">1</div>
<div class="b" style="left:541.75px;top:865.0px;width:22.5px;height:25px;background:#27ae60;border-radius:3px"></div>
<div class="t" style="left:541.75px;top:872.0px;width:22.5px;text-align:center;font-size:11px;font-weight:700;color:#fff">1</div>
<div class="t" style="left:630px;top:873.2px;font-size:12.8px;color:#222">Con Rad Physics</div>
<div class="b" style="left:809px;top:867.4px;width:22px;height:24.5px;background:#eceff1;border-radius:3px"></div>
<div class="t" style="left:809px;top:875.4px;width:22px;text-align:center;font-size:11px;color:#333">1</div>
<div class="t" style="left:840px;top:870.3px;font-size:11.8px;color:#333">77336: 6/14/21</div>
<div class="t" style="left:249.5px;top:903.7px;font-size:12.5px;color:#333">77431 / PC</div>
<div class="b" style="left:445.0px;top:903.2px;width:22px;height:24px;background:#eceff1;border-radius:3px"></div>
<div class="t" style="left:445.0px;top:910.2px;width:22px;text-align:center;font-size:11px;color:#333;-webkit-text-stroke:0.2px #333">1</div>
<div class="b" style="left:541.75px;top:902.2px;width:22.5px;height:25px;background:#27ae60;border-radius:3px"></div>
<div class="t" style="left:541.75px;top:909.2px;width:22.5px;text-align:center;font-size:11px;font-weight:700;color:#fff">1</div>
<div class="t" style="left:630px;top:910.4000000000001px;font-size:12.8px;color:#222">Wk Tx Mgt 1/2 Wk</div>
<div class="b" style="left:809px;top:904.6px;width:22px;height:24.5px;background:#eceff1;border-radius:3px"></div>
<div class="t" style="left:809px;top:912.6px;width:22px;text-align:center;font-size:11px;color:#333">1</div>
<div class="t" style="left:840px;top:907.5px;font-size:11.8px;color:#333">77431: 6/14/21</div>
</body></html>
